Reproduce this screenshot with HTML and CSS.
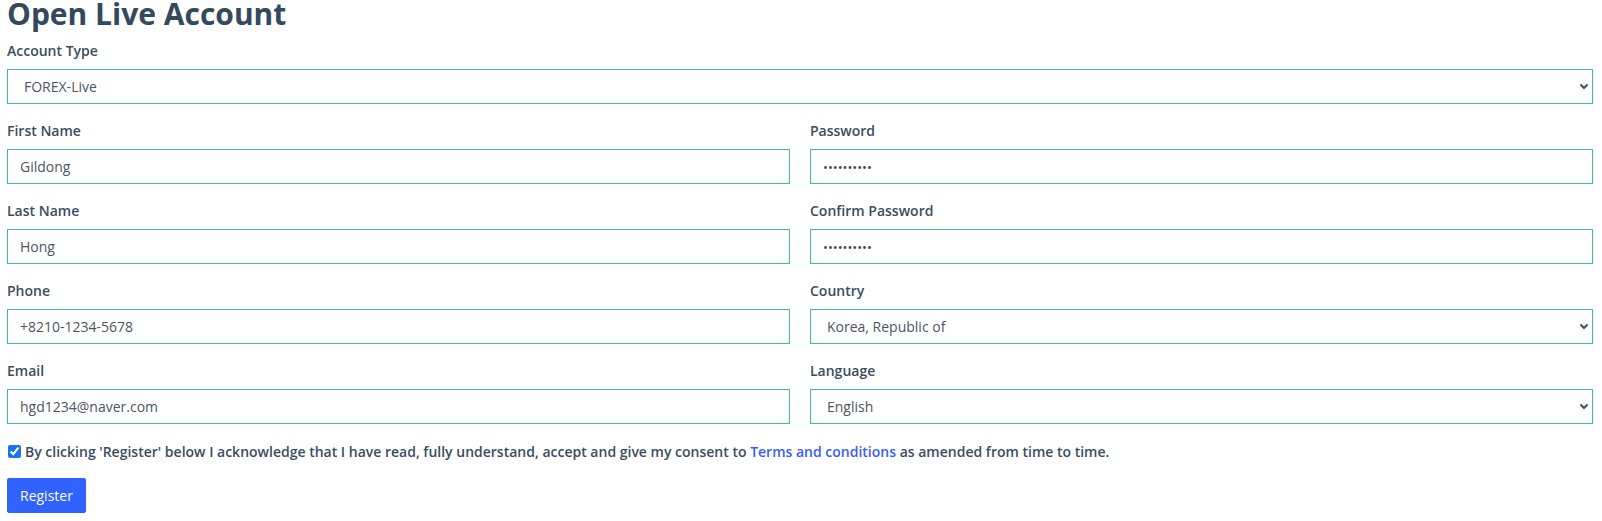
FILE: index.html
```html
<!DOCTYPE html>
<html lang="en">
<head>
<meta charset="utf-8">
<title>Open Live Account</title>
<link rel="stylesheet" href="styles.css">
</head>
<body>
<form class="page">
  <h1 class="title">Open Live Account</h1>

  <div class="group">
    <label class="label" for="acct">Account Type</label>
    <div class="select-wrap">
      <select id="acct" class="control select">
        <option>FOREX-Live</option>
      </select>
      <svg class="chev" width="10" height="7" viewBox="0 0 10 7"><path d="M1.5 1.5 5 5 8.5 1.5" fill="none" stroke="#454b5c" stroke-width="2"/></svg>
    </div>
  </div>

  <div class="grid">
    <div class="group">
      <label class="label" for="fn">First Name</label>
      <input id="fn" class="control" type="text" value="Gildong">
    </div>
    <div class="group">
      <label class="label" for="pw">Password</label>
      <input id="pw" class="control pass" type="password" value="1234567890">
    </div>
    <div class="group">
      <label class="label" for="ln">Last Name</label>
      <input id="ln" class="control" type="text" value="Hong">
    </div>
    <div class="group">
      <label class="label" for="pw2">Confirm Password</label>
      <input id="pw2" class="control pass" type="password" value="1234567890">
    </div>
    <div class="group">
      <label class="label" for="ph">Phone</label>
      <input id="ph" class="control" type="text" value="+8210-1234-5678">
    </div>
    <div class="group">
      <label class="label" for="ct">Country</label>
      <div class="select-wrap">
        <select id="ct" class="control select">
          <option>Korea, Republic of</option>
        </select>
        <svg class="chev" width="10" height="7" viewBox="0 0 10 7"><path d="M1.5 1.5 5 5 8.5 1.5" fill="none" stroke="#454b5c" stroke-width="2"/></svg>
      </div>
    </div>
    <div class="group">
      <label class="label" for="em">Email</label>
      <input id="em" class="control" type="text" value="hgd1234@naver.com">
    </div>
    <div class="group">
      <label class="label" for="lg">Language</label>
      <div class="select-wrap">
        <select id="lg" class="control select">
          <option>English</option>
        </select>
        <svg class="chev" width="10" height="7" viewBox="0 0 10 7"><path d="M1.5 1.5 5 5 8.5 1.5" fill="none" stroke="#454b5c" stroke-width="2"/></svg>
      </div>
    </div>
  </div>

  <div class="check-row">
    <input id="agree" class="check" type="checkbox" checked>
    <label for="agree" class="check-label">By clicking 'Register' below I acknowledge that I have read, fully understand, accept and give my consent to <a href="#" class="link">Terms and conditions</a> as amended from time to time.</label>
  </div>

  <button type="button" class="btn">Register</button>
</form>
</body>
</html>
```

FILE: styles.css
```css
html, body {
  margin: 0;
  padding: 0;
  background: #ffffff;
}

body {
  font-family: "Open Sans", "Noto Sans", "Liberation Sans", sans-serif;
  font-size: 14px;
  line-height: 1.5;
  color: #34495e;
  overflow: hidden;
}

.page {
  padding: 0 9px 0 7px;
}

.title {
  margin: -4px 0 8px;
  font-size: 30px;
  line-height: 36px;
  font-weight: 700;
  color: #34495e;
}

.group {
  margin-bottom: 16px;
  min-width: 0;
}

.label {
  display: block;
  margin-bottom: 8px;
  font-weight: 600;
  color: #3a4d61;
}

.grid {
  display: grid;
  grid-template-columns: 1fr 1fr;
  column-gap: 20px;
}

.control {
  display: block;
  box-sizing: border-box;
  width: 100%;
  height: 35px;
  margin: 0;
  padding: 6px 12px;
  font-family: inherit;
  font-size: 14px;
  line-height: 21px;
  color: #4b5563;
  background: #ffffff;
  border: 1px solid #3ebf9e;
  border-radius: 0;
  outline: none;
}

.pass {
  font-size: 13px;
  color: #3d4757;
}

.select-wrap {
  position: relative;
}

.select {
  appearance: none;
  -webkit-appearance: none;
  padding-left: 16px;
  padding-right: 30px;
}

.chev {
  position: absolute;
  right: 4px;
  top: 14px;
  pointer-events: none;
}

.check-row {
  display: flex;
  align-items: center;
  gap: 4px;
  height: 22px;
  margin-bottom: 16px;
}

.check {
  width: 13px;
  height: 13px;
  margin: 0 0 0 1px;
  accent-color: #1a73e8;
}

.check-label {
  font-weight: 600;
  color: #3a4d61;
}

.link {
  color: #3a5cff;
  text-decoration: none;
}

.btn {
  display: block;
  height: 35px;
  padding: 6px 12px;
  font-family: inherit;
  font-size: 14px;
  line-height: 21px;
  color: #ffffff;
  background: #2f62ff;
  border: 1px solid #2f62ff;
  border-radius: 2px;
}
```
